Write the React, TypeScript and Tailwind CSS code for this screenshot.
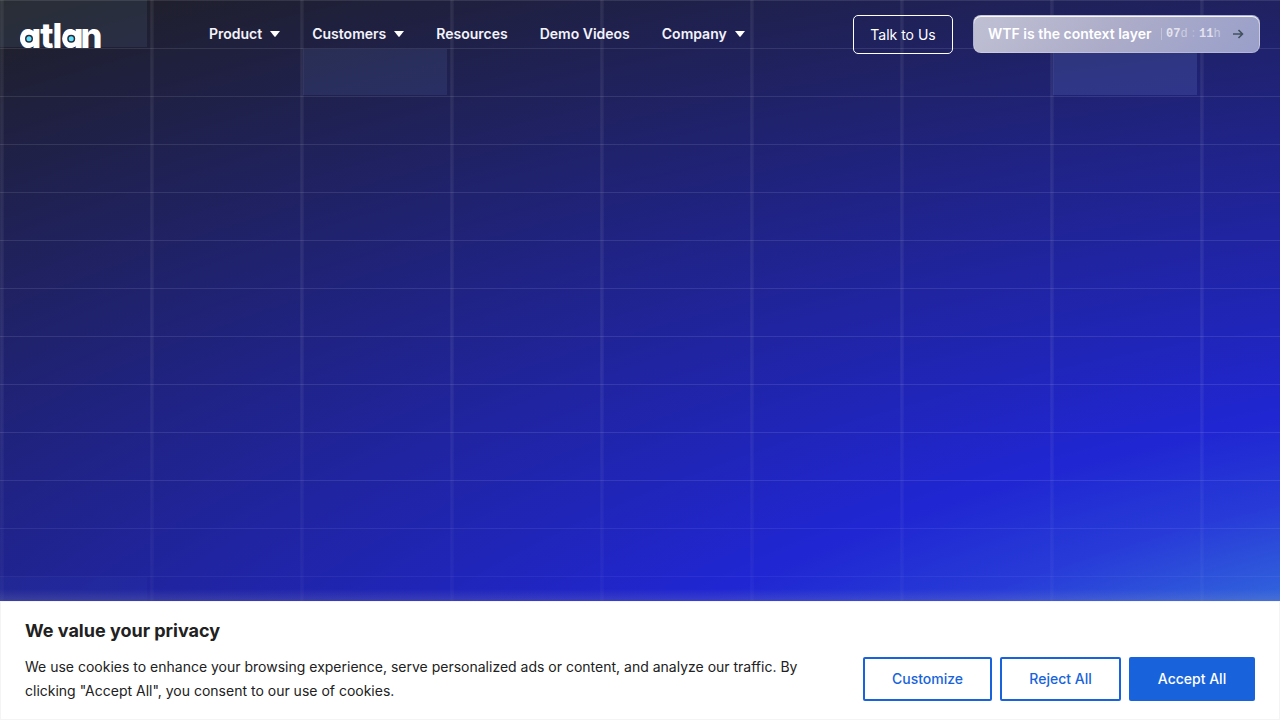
import React from 'react';

const navItems = [
  { label: 'Product', menu: true },
  { label: 'Customers', menu: true },
  { label: 'Resources', menu: false },
  { label: 'Demo Videos', menu: false },
  { label: 'Company', menu: true },
];

function Logo() {
  return (
    <svg width="84" height="42" viewBox="0 -4 84 42" className="block overflow-visible" aria-label="atlan">
      <text
        x="-0.8 20.2 32.4 41.4 60.6"
        y="30.5"
        fill="#fff"
        className="font-['Inter'] text-[34.5px] font-extrabold [font-feature-settings:'cv11']"
      >
        atlan
      </text>
      {[9, 51.2].map((cx) => (
        <g key={cx}>
          <circle cx={cx} cy="21.7" r="9" fill="#fff" />
          <circle cx={cx} cy="21.7" r="4" fill="#252b3b" />
          <circle cx={cx} cy="21.7" r="2.5" fill="#62e1fc" />
        </g>
      ))}
    </svg>
  );
}

function GridLines() {
  return (
    <div className="absolute inset-0">
      {/* Highlighted cells */}
      <div className="absolute left-0 top-0 h-[47px] w-[147px] bg-[#6e96b4]/13" />
      <div className="absolute left-[303px] top-[49px] h-[46px] w-[144px] bg-[#6e96d2]/13" />
      <div className="absolute left-[1053px] top-[49px] h-[46px] w-[144px] bg-[#80a0f0]/16" />
      <div className="absolute left-0 top-[577px] h-6 w-[147px] bg-[#62a1fc]/4" />
      <div className="absolute inset-0 bg-[repeating-linear-gradient(90deg,rgba(255,255,255,0.03)_0px,rgba(255,255,255,0.075)_1px,rgba(255,255,255,0.075)_2px,rgba(255,255,255,0.03)_4px,transparent_4px,transparent_150px)] [mask-image:linear-gradient(#000_60%,rgba(0,0,0,0.4))]" />
      <div className="absolute inset-0 bg-[repeating-linear-gradient(180deg,rgba(255,255,255,0.1)_0px,rgba(255,255,255,0.1)_1px,transparent_1px,transparent_48px)] [mask-image:linear-gradient(#000_78%,rgba(0,0,0,0.4))]" />
    </div>
  );
}

function Header() {
  return (
    <header className="relative flex h-[68px] items-center px-5">
      <a href="#" className="w-[189px]">
        <Logo />
      </a>
      <nav className="-mt-px flex items-center gap-8 text-[14px] font-semibold text-[#f3f3fa]">
        {navItems.map((item) => (
          <a href="#" key={item.label} className="flex items-center gap-2">
            {item.label}
            {item.menu && (
              <svg width="10" height="6" viewBox="0 0 10 6" fill="#fff">
                <path d="M0 0h10L5.6 5.6Q5 6.2 4.4 5.6Z" />
              </svg>
            )}
          </a>
        ))}
      </nav>
      <div className="ml-auto flex items-center gap-5">
        <a href="#" className="mt-px flex h-[39px] w-[100px] items-center justify-center rounded-[5px] border border-white text-[14px] text-white">
          Talk to Us
        </a>
        <a
          href="#"
          className="flex h-[38px] w-[287px] items-center rounded-lg border border-white/20 bg-[linear-gradient(135deg,#c0c0d4,#acacc9_50%,#999fca)] pl-[14px] shadow-[inset_0_1px_0_rgba(255,255,255,0.9)]"
        >
          <span className="-mt-px w-[173px] text-[14px] font-semibold text-white">WTF is the context layer</span>
          <span className="mr-1 h-3 w-px bg-white/30" />
          <span className="font-['Liberation_Mono'] text-[12px] font-bold whitespace-pre text-white/70">
            07<span className="font-normal text-white/45">d</span>
          </span>
          <span className="mx-[2px] w-[7.5px] text-center font-['Liberation_Mono'] text-[12px] text-white/20">:</span>
          <span className="font-['Liberation_Mono'] text-[12px] font-bold text-white/70">
            11<span className="font-normal text-white/45">h</span>
          </span>
          <svg className="ml-[11px]" width="12" height="10" viewBox="0 0 12 10" fill="none" stroke="#43515f" strokeWidth="1.6">
            <path d="M1 5h9.5M6.5 1l4 4-4 4" />
          </svg>
        </a>
      </div>
    </header>
  );
}

function CookieBanner() {
  return (
    <section className="relative flex h-[119px] flex-col border border-[#f4f4f4] bg-white px-6 pt-[19px] text-[#212121]">
      <h2 className="text-[18px] leading-5 font-bold">We value your privacy</h2>
      <div className="mt-4 flex justify-between">
        <p className="-mt-0.5 w-[800px] text-[14px] leading-6">
          We use cookies to enhance your browsing experience, serve personalized ads or content, and analyze our traffic. By
          clicking "Accept All", you consent to our use of cookies.
        </p>
        <div className="flex shrink-0 gap-2 text-[14px] font-medium text-[#1863dc]">
          <button className="h-11 w-[129px] rounded-[2px] border-2 border-[#1863dc] pb-0.5">Customize</button>
          <button className="h-11 w-[121px] rounded-[2px] border-2 border-[#1863dc] pb-0.5">Reject All</button>
          <button className="h-11 w-[126px] rounded-[2px] bg-[#1863dc] pb-0.5 text-white">Accept All</button>
        </div>
      </div>
    </section>
  );
}

function App() {
  return (
    <div className="h-[720px] w-[1280px] overflow-hidden font-['Inter',sans-serif]">
      <main className="relative h-[601px] bg-[radial-gradient(3243px_1142px_at_1995px_900px,#62e1fc_6.5%,#3060dc_35%,#283bd8_41%,#2434d5_43.5%,#2026d2_47.7%,#1f1f23_100%)]">
        <GridLines />
        <div className="absolute inset-x-0 bottom-0 h-3 bg-linear-to-b from-transparent to-[#a0a0b0]/20" />
        <Header />
      </main>
      <CookieBanner />
    </div>
  );
}

export default App;
